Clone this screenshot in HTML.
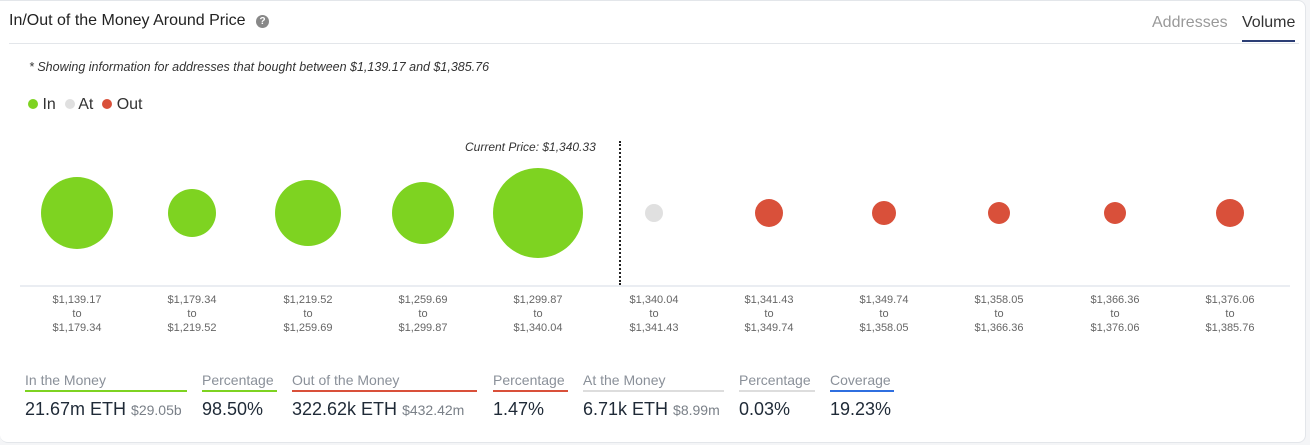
<!DOCTYPE html><html><head><style>
body{margin:0;width:1310px;height:445px;background:#f4f5f7;font-family:"Liberation Sans",sans-serif;overflow:hidden}
.card{position:absolute;left:0;top:0;width:1305px;height:441px;background:#fff;border:1px solid #e3e6ea;border-radius:0 8px 8px 8px;border-left:none}
.a{position:absolute;white-space:nowrap}
.lbl{position:absolute;top:304px;width:110px;text-align:center;font-size:11px;line-height:14px;color:#666;margin-left:-55px}
.st{position:absolute;top:371px}
.st .t{font-size:14px;color:#8a9099;padding-bottom:2px;border-bottom:2px solid}
.st .v{font-size:18px;color:#1f2a37;margin-top:7px;white-space:nowrap}
.st .v small{font-size:14px;color:#7a8088}
</style></head><body><div class="card">
<div class="a" style="left:9px;top:11px;font-size:16px;color:#222">In/Out of the Money Around Price <span style="display:inline-block;width:13px;height:13px;border-radius:50%;background:#888;color:#fff;font-size:10px;text-align:center;line-height:13px;font-weight:bold;margin-left:6px;vertical-align:1px">?</span></div>
<div class="a" style="left:1152px;top:13px;font-size:16px;color:#999">Addresses</div>
<div class="a" style="left:1242px;top:13px;font-size:16px;color:#333;padding-bottom:8px;border-bottom:2px solid #2c3e75">Volume</div>
<div class="a" style="left:9px;top:42px;width:1290px;height:1px;background:#e3e6ea"></div>
<div class="a" style="left:29px;top:59px;font-size:12.5px;font-style:italic;color:#333">* Showing information for addresses that bought between $1,139.17 and $1,385.76</div>
<div class="a" style="left:28px;top:95px;font-size:16px;color:#333"><span style="display:inline-block;width:10px;height:10px;border-radius:50%;background:#7ed321"></span> In &nbsp;<span style="display:inline-block;width:10px;height:10px;border-radius:50%;background:#e0e0e0"></span> At &nbsp;<span style="display:inline-block;width:10px;height:10px;border-radius:50%;background:#d9503a"></span> Out</div>
<div class="a" style="left:465px;top:139px;font-size:12px;font-style:italic;color:#333">Current Price: $1,340.33</div>
<div class="a" style="left:619px;top:140px;height:144px;border-left:2px dotted #222"></div>
<svg class="a" style="left:0;top:0" width="1310" height="300">
<g fill="#7ed321"><circle cx="77" cy="212" r="36"/><circle cx="192" cy="212" r="24"/><circle cx="308" cy="212" r="33"/><circle cx="423" cy="212" r="31"/><circle cx="538" cy="212" r="45"/></g>
<circle cx="654" cy="212" r="9" fill="#e0e0e0"/>
<g fill="#d9503a"><circle cx="769" cy="212" r="14"/><circle cx="884" cy="212" r="12"/><circle cx="999" cy="212" r="11"/><circle cx="1115" cy="212" r="11"/><circle cx="1230" cy="212" r="14"/></g>
<line x1="20" y1="285" x2="1290" y2="285" stroke="#d5dbe6" stroke-width="1"/>
</svg>
<div class="lbl" style="left:77px;top:292px">$1,139.17<br>to<br>$1,179.34</div>
<div class="lbl" style="left:192px;top:292px">$1,179.34<br>to<br>$1,219.52</div>
<div class="lbl" style="left:308px;top:292px">$1,219.52<br>to<br>$1,259.69</div>
<div class="lbl" style="left:423px;top:292px">$1,259.69<br>to<br>$1,299.87</div>
<div class="lbl" style="left:538px;top:292px">$1,299.87<br>to<br>$1,340.04</div>
<div class="lbl" style="left:654px;top:292px">$1,340.04<br>to<br>$1,341.43</div>
<div class="lbl" style="left:769px;top:292px">$1,341.43<br>to<br>$1,349.74</div>
<div class="lbl" style="left:884px;top:292px">$1,349.74<br>to<br>$1,358.05</div>
<div class="lbl" style="left:999px;top:292px">$1,358.05<br>to<br>$1,366.36</div>
<div class="lbl" style="left:1115px;top:292px">$1,366.36<br>to<br>$1,376.06</div>
<div class="lbl" style="left:1230px;top:292px">$1,376.06<br>to<br>$1,385.76</div>
<div class="st" style="left:25px"><div class="t" style="border-color:#7ed321;width:162px">In the Money</div><div class="v">21.67m ETH <small>$29.05b</small></div></div>
<div class="st" style="left:202px"><div class="t" style="border-color:#7ed321;width:75px">Percentage</div><div class="v">98.50%</div></div>
<div class="st" style="left:292px"><div class="t" style="border-color:#d9503a;width:185px">Out of the Money</div><div class="v">322.62k ETH <small>$432.42m</small></div></div>
<div class="st" style="left:493px"><div class="t" style="border-color:#d9503a;width:75px">Percentage</div><div class="v">1.47%</div></div>
<div class="st" style="left:583px"><div class="t" style="border-color:#ddd;width:141px">At the Money</div><div class="v">6.71k ETH <small>$8.99m</small></div></div>
<div class="st" style="left:739px"><div class="t" style="border-color:#ddd;width:76px">Percentage</div><div class="v">0.03%</div></div>
<div class="st" style="left:830px"><div class="t" style="border-color:#2f6fe0;width:64px">Coverage</div><div class="v">19.23%</div></div>
</div></body></html>
